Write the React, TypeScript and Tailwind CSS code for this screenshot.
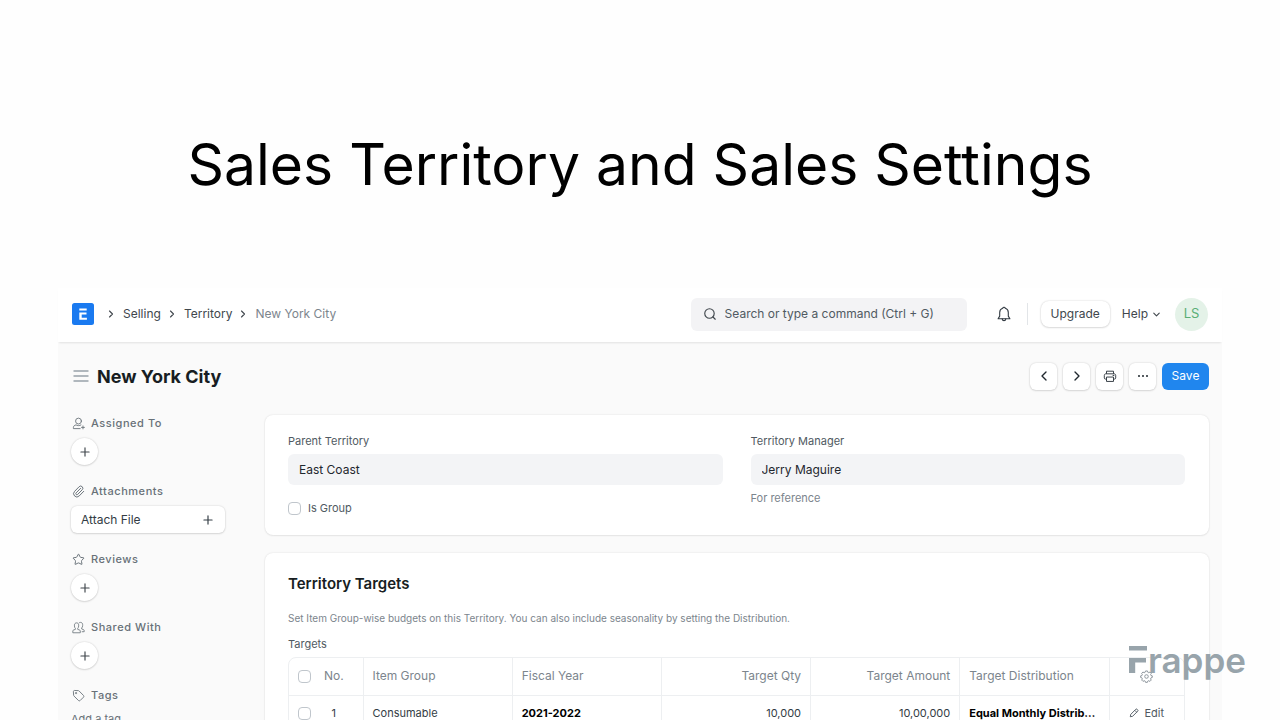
import type { ReactNode } from "react";
import { ChevronDown, ChevronLeft, ChevronRight, Paperclip, Plus, Star } from "lucide-react";

const crumbs = ["Selling", "Territory"];

const rows = [
  {
    no: 1,
    group: "Consumable",
    year: "2021-2022",
    qty: "10,000",
    amount: "10,00,000",
    distribution: "Equal Monthly Distribution",
  },
];

const checkbox =
  "size-[13px] shrink-0 appearance-none rounded-[4px] border border-[#c0c6cc] bg-white checked:border-[#2490ef] checked:bg-[#2490ef]";
const softShadow = "shadow-[0_0_2px_rgba(0,0,0,0.18),0_1px_2px_rgba(0,0,0,0.1)]";
const cardShadow = "shadow-[0_0_2px_rgba(0,0,0,0.12),0_1px_2px_rgba(0,0,0,0.06)]";

function SearchIcon() {
  return (
    <svg viewBox="0 0 16 16" className="size-[14px] shrink-0" fill="none" stroke="#40474d" strokeWidth="1.3" strokeLinecap="round">
      <circle cx="7.4" cy="7.4" r="5.4" />
      <path d="M11.4 11.4 14 14" />
    </svg>
  );
}

function MenuIcon() {
  return (
    <svg viewBox="0 0 16 12" className="h-3 w-4" stroke="#98a1a9" strokeWidth="1.5">
      <path d="M.5 1h15M.5 6h15M.5 11h15" />
    </svg>
  );
}

function BellIcon() {
  return (
    <svg viewBox="0 0 16 16" className="size-4" fill="none" stroke="#323a42" strokeWidth="1.1" strokeLinejoin="round" strokeLinecap="round">
      <path d="M8 1.3c.7 0 1.2.4 1.3 1 1.9.6 3 2.2 3 4.2v3.6l1.600 2.600H2.100l1.600-2.600V6.500c0-2 1.100-3.600 3-4.200.1-.6.600-1 1.300-1Z" />
      <path d="M6.200 12.900c.1 1 .8 1.700 1.800 1.700s1.700-.7 1.800-1.700" />
    </svg>
  );
}

function PrinterIcon() {
  return (
    <svg viewBox="0 0 16 16" className="size-[14px]" fill="none" stroke="#323a42" strokeWidth="1.1" strokeLinejoin="round">
      <path d="M4 5.500V2.500h8v3" />
      <path d="M4 11.500H2.800c-.8 0-1.300-.5-1.300-1.300V7.300c0-1 .7-1.800 1.800-1.800h9.400c1.100 0 1.800.8 1.800 1.800v2.900c0 .8-.5 1.300-1.300 1.300H12" />
      <path d="M4 9.200h8v5H4z" />
      <path d="M11.500 7.400h1" strokeLinecap="round" />
    </svg>
  );
}

function AssignIcon() {
  return (
    <svg viewBox="0 0 16 16" className="size-[13px]" fill="none" stroke="#687178" strokeWidth="1.1" strokeLinecap="round" strokeLinejoin="round">
      <circle cx="8" cy="5" r="3.600" />
      <path d="M10 14.300H1.700v-1.200c0-1.700 1.200-3.100 3.300-3.400.6.5 1.700.9 3 .9s2.200-.3 3-.8" />
      <path d="M13.500 11v3.600M11.700 12.800h3.600" />
    </svg>
  );
}

function SharedIcon() {
  return (
    <svg viewBox="0 0 16 16" className="size-[13px]" fill="none" stroke="#687178" strokeWidth="1" strokeLinejoin="round" strokeLinecap="round">
      <path d="M1 14v-1.800c0-.6.4-1 .9-1.100l2.300-.8v-1.200c-.8-.7-1.200-1.700-1.200-3V5c0-1.600 1.100-2.700 2.600-2.700S8.200 3.400 8.200 5v1.100c0 1.300-.4 2.300-1.200 3v1.200l2.300.8c.5.1.9.500.9 1.100V14z" />
      <path d="M8.700 2.300c.4-.4 1-.6 1.700-.6 1.600 0 2.700 1.100 2.700 2.700v1.300c0 1.200-.4 2.200-1.200 2.900v1.200l2.200.8c.600.2.9.6.9 1.100v1.500h-2.500" />
    </svg>
  );
}

function TagIcon() {
  return (
    <svg viewBox="0 0 16 16" className="size-[13px]" fill="none" stroke="#687178" strokeWidth="1.1" strokeLinejoin="round">
      <path d="M1.700 3.200c0-.8.600-1.400 1.400-1.400l4.700.2c.4 0 .7.200 1 .5l5.400 5.500c.6.600.6 1.400 0 2l-4.200 4.200c-.6.6-1.400.6-2 0L2.500 8.700c-.3-.3-.5-.6-.5-1z" />
      <circle cx="5" cy="5" r=".8" />
    </svg>
  );
}

function GearIcon() {
  return (
    <svg viewBox="0 0 16 16" className="size-[13px]" fill="none" stroke="#8d959c" strokeWidth="1.2" strokeLinejoin="round">
      <circle cx="8" cy="8" r="2.200" />
      <path d="M6.800 1.200h2.400l.5 1.700 1 .4 1.600-.8 1.600 1.700-.9 1.500.5 1.100 1.600.4v2l-1.600.5-.5 1.100.8 1.600-1.600 1.600-1.600-.9-1 .5-.5 1.600H6.800l-.5-1.600-1-.5-1.600.9-1.600-1.600.8-1.600-.5-1.100-1.600-.5v-2l1.600-.4.5-1.100-.9-1.500 1.600-1.700 1.600.8 1-.4z" />
    </svg>
  );
}

function PencilIcon() {
  return (
    <svg viewBox="0 0 16 16" className="size-[10px]" fill="none" stroke="#505a62" strokeWidth="1.5" strokeLinejoin="round">
      <path d="m2 14 .8-3.800L10.900 2c.6-.6 1.400-.6 2 0l1.100 1.100c.6.600.6 1.400 0 2L5.800 13.200z" />
      <path d="m9.300 3.700 3 3" />
    </svg>
  );
}

function SidebarGroup({ icon, label, children }: { icon: ReactNode; label: string; children: ReactNode }) {
  return (
    <section className="flex flex-col items-start gap-[5px]">
      <h3 className="flex h-5 items-center gap-[6px] pl-px text-[11px] font-medium tracking-wider text-[#687178]">
        {icon}
        {label}
      </h3>
      {children}
    </section>
  );
}

function AddButton({ label }: { label: string }) {
  return (
    <button aria-label={label} className={`grid size-[27px] place-items-center rounded-full bg-white text-[#40474d] ${softShadow}`}>
      <Plus className="size-[14px]" strokeWidth={2} />
    </button>
  );
}

function ToolButton({ label, children }: { label: string; children: ReactNode }) {
  return (
    <button aria-label={label} className={`grid size-[27px] place-items-center rounded-md bg-white text-[#1f272e] ${softShadow}`}>
      {children}
    </button>
  );
}

function Navbar() {
  return (
    <header className="z-10 flex h-[54px] shrink-0 items-center bg-white px-[14px] pb-[2px] text-[12px] text-[#40474d] shadow-[0_2px_2px_-1px_rgba(0,0,0,0.1)]">
      <a href="#home" aria-label="Home" className="shrink-0">
        <svg viewBox="0 0 22 22" className="size-[22px]">
          <rect width="22" height="22" rx="2.500" fill="#1a7af0" />
          <path d="M7.300 5.500h7.400v2H7.300zM7.300 9.400h7.200v2H9.700v3.400h5.200v2H7.300z" fill="#fff" />
        </svg>
      </a>
      <nav aria-label="Breadcrumb" className="ml-[10px] flex flex-1 items-center">
        {crumbs.map((c) => (
          <span key={c} className="flex items-center">
            <ChevronRight className="mx-px size-[12px]" strokeWidth={2.2} />
            <a href={`#${c.toLowerCase()}`} className="mr-[4px] ml-[5px]">{c}</a>
          </span>
        ))}
        <ChevronRight className="mx-px size-[12px]" strokeWidth={2.2} />
        <span className="ml-[5px] text-[#7c858d]">New York City</span>
      </nav>
      <label className="flex h-[33px] w-[276px] items-center gap-2 rounded-md bg-[#f3f3f5] px-3">
        <SearchIcon />
        <input
          aria-label="Search"
          placeholder="Search or type a command (Ctrl + G)"
          className="min-w-0 flex-1 bg-transparent outline-none placeholder:text-[#505a62]"
        />
      </label>
      <button aria-label="Notifications" className="ml-[29px]">
        <BellIcon />
      </button>
      <span className="ml-[15px] h-[22px] w-px bg-[#e2e5e8]" />
      <button className={`ml-[13px] h-[26px] rounded-lg bg-white px-[10px] ${softShadow}`}>Upgrade</button>
      <button className="ml-[12px] flex items-center gap-[3px]">
        Help
        <ChevronDown className="size-[11px]" strokeWidth={2.4} />
      </button>
      <button aria-label="Account" className="ml-[13px] size-[33px] rounded-full bg-[#e4f2e8] text-[13px] text-[#59ae75]">
        LS
      </button>
    </header>
  );
}

function Sidebar() {
  return (
    <aside className="flex w-[154px] shrink-0 flex-col gap-[16px]">
      <SidebarGroup icon={<AssignIcon />} label="Assigned To">
        <AddButton label="Assign" />
      </SidebarGroup>
      <SidebarGroup icon={<Paperclip className="size-[13px]" strokeWidth={1.8} />} label="Attachments">
        <button className={`flex h-[27px] w-full items-center justify-between rounded-md bg-white px-[10px] text-[12px] text-[#333c44] ${softShadow}`}>
          Attach File
          <Plus className="size-[14px]" strokeWidth={2} />
        </button>
      </SidebarGroup>
      <SidebarGroup icon={<Star className="size-[13px]" strokeWidth={1.8} />} label="Reviews">
        <AddButton label="Add review" />
      </SidebarGroup>
      <SidebarGroup icon={<SharedIcon />} label="Shared With">
        <AddButton label="Share" />
      </SidebarGroup>
      <SidebarGroup icon={<TagIcon />} label="Tags">
        <button className="mt-px text-[11px] text-[#687178]">Add a tag ...</button>
      </SidebarGroup>
    </aside>
  );
}

function Field({ id, label, value, children }: { id: string; label: string; value: string; children: ReactNode }) {
  return (
    <div className="flex min-w-0 flex-1 flex-col">
      <label htmlFor={id} className="text-[11px] leading-4 text-[#505a62]">{label}</label>
      <input id={id} defaultValue={value} className="mt-[5px] h-[31px] rounded-md bg-[#f3f4f6] px-[11px] text-[12px] text-[#1f272e] outline-none" />
      {children}
    </div>
  );
}

function TargetsTable() {
  const cell = "border-l border-[#edeff1] px-[9px]";
  return (
    <div className="mt-[5px] overflow-hidden rounded-t-lg border border-[#edeff1]">
      <table className="w-full table-fixed border-collapse">
        <thead className="text-[12px]">
          <tr className="h-[37px] border-b border-[#edeff1] text-left text-[#7c858d] [&>th]:font-normal">
            <th className="w-[74px] pr-[6px] pl-[9px]">
              <span className="flex items-center">
                <input type="checkbox" aria-label="Select all" className={checkbox} />
                <span className="flex-1 text-center">No.</span>
              </span>
            </th>
            <th className={cell}>Item Group</th>
            <th className={cell}>Fiscal Year</th>
            <th className={`${cell} text-right`}>Target Qty</th>
            <th className={`${cell} text-right`}>Target Amount</th>
            <th className={cell}>Target Distribution</th>
            <th className="w-[75px] border-l border-[#edeff1]">
              <button aria-label="Configure columns" className="mx-auto block">
                <GearIcon />
              </button>
            </th>
          </tr>
        </thead>
        <tbody className="text-[11px]">
          {rows.map((r) => (
            <tr key={r.no} className="h-[36px] border-b border-[#edeff1] text-[#333c44]">
              <td className="pr-[6px] pl-[9px]">
                <span className="flex items-center">
                  <input type="checkbox" aria-label={`Select row ${r.no}`} className={checkbox} />
                  <span className="flex-1 text-center">{r.no}</span>
                </span>
              </td>
              <td className={cell}>{r.group}</td>
              <td className={`${cell} font-bold text-black`}>{r.year}</td>
              <td className={`${cell} text-right`}>{r.qty}</td>
              <td className={`${cell} text-right`}>{r.amount}</td>
              <td className={`${cell} truncate font-bold text-black`}>{r.distribution}</td>
              <td className="border-l border-[#edeff1]">
                <button className="mx-auto flex items-center gap-[5px] text-[#505a62]">
                  <PencilIcon />
                  Edit
                </button>
              </td>
            </tr>
          ))}
        </tbody>
      </table>
    </div>
  );
}

function FrappeMark() {
  return (
    <div className="absolute right-[34px] bottom-[40px] flex items-start text-[#98a4ab]">
      <svg viewBox="0 0 19 28" className="mt-[6px] h-[28px] w-[19px]" fill="currentColor" aria-hidden="true">
        <path d="M0 0h18v4.500H0zM0 12h17v4.500H6.200V27H0z" />
      </svg>
      <span className="text-[35px] leading-[40px] font-semibold">rappe</span>
    </div>
  );
}

export default function App() {
  return (
    <div className="relative flex h-screen flex-col overflow-hidden bg-[#fefefe] font-['Inter',sans-serif]">
      <h1 className="shrink-0 pt-[129px] pb-[87px] text-center text-[57px] leading-[72px] text-black">
        Sales Territory and Sales Settings
      </h1>

      <div className="mx-[58px] flex min-h-0 flex-1 flex-col">
        <Navbar />
        <main className="min-h-0 flex-1 overflow-hidden bg-[#fafafa] px-[13px]">
          <div className="flex h-[68px] items-center gap-[6px]">
            <button aria-label="Toggle sidebar" className="mx-[2px]">
              <MenuIcon />
            </button>
            <h2 className="flex-1 text-[18px] font-bold text-[#171d22]">New York City</h2>
            <ToolButton label="Previous">
              <ChevronLeft className="size-4" strokeWidth={2} />
            </ToolButton>
            <ToolButton label="Next">
              <ChevronRight className="size-4" strokeWidth={2} />
            </ToolButton>
            <ToolButton label="Print">
              <PrinterIcon />
            </ToolButton>
            <ToolButton label="More">
              <svg viewBox="0 0 12 4" className="h-1 w-3" fill="currentColor">
                <circle cx="2" cy="2" r="1" />
                <circle cx="6" cy="2" r="1" />
                <circle cx="10" cy="2" r="1" />
              </svg>
            </ToolButton>
            <button className="h-[27px] w-[47px] rounded-md bg-[#2086ee] text-[12px] text-white">Save</button>
          </div>

          <div className="flex gap-10 pt-[3px]">
            <Sidebar />
            <div className="flex min-w-0 flex-1 flex-col gap-[18px] pt-[2px]">
              <section className={`flex h-[120px] gap-7 rounded-lg bg-white pt-[18px] pr-6 pl-[23px] ${cardShadow}`}>
                <Field id="parent" label="Parent Territory" value="East Coast">
                  <label className="mt-[15px] flex items-center gap-[7px] text-[11px] leading-4 text-[#505a62]">
                    <input type="checkbox" className={checkbox} />
                    Is Group
                  </label>
                </Field>
                <Field id="manager" label="Territory Manager" value="Jerry Maguire">
                  <p className="mt-[5px] text-[11px] leading-4 text-[#7c858d]">For reference</p>
                </Field>
              </section>

              <section className={`rounded-t-lg bg-white pt-[21px] pr-6 pb-6 pl-[23px] ${cardShadow}`}>
                <h3 className="text-[15px] leading-5 font-semibold text-[#171d22]">Territory Targets</h3>
                <p className="mt-[16px] text-[10px] leading-4 text-[#7c858d]">
                  Set Item Group-wise budgets on this Territory. You can also include seasonality by setting the Distribution.
                </p>
                <p className="mt-[10px] text-[11px] leading-4 text-[#505a62]">Targets</p>
                <TargetsTable />
              </section>
            </div>
          </div>
        </main>
      </div>

      <FrappeMark />
    </div>
  );
}
